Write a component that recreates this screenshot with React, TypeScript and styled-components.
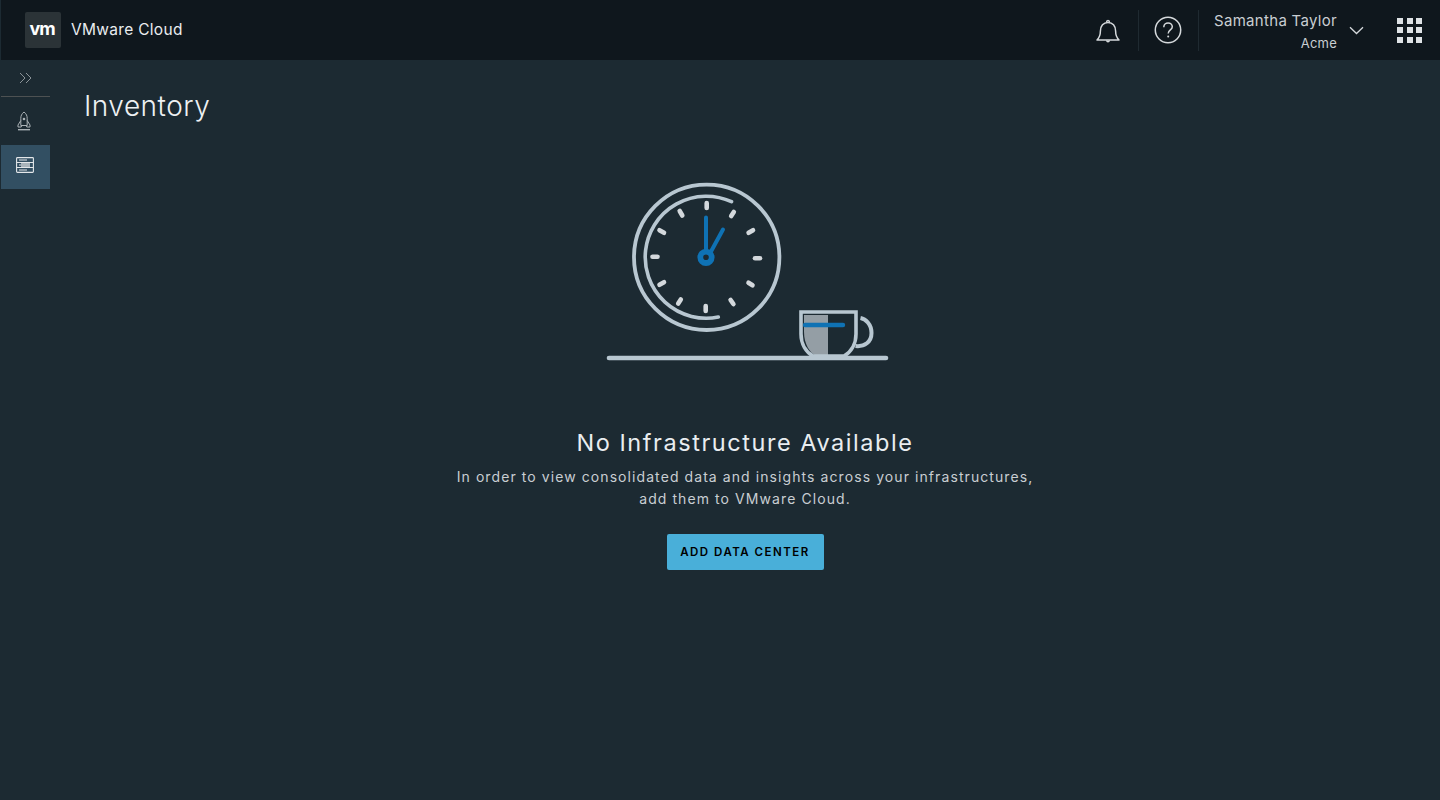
import styled, { createGlobalStyle } from "styled-components";

const GlobalStyle = createGlobalStyle`
  html, body {
    margin: 0;
    padding: 0;
    background: #1c2a32;
  }
  * {
    box-sizing: border-box;
  }
`;

const Page = styled.div`
  width: 1440px;
  height: 800px;
  overflow: hidden;
  display: flex;
  flex-direction: column;
  padding-left: 1px;
  background: #1c2a32;
  font-family: Inter, "Liberation Sans", sans-serif;
`;

const Header = styled.header`
  height: 60px;
  flex: none;
  display: flex;
  align-items: center;
  padding-left: 24px;
  background: #0f171d;
`;

const Logo = styled.div`
  width: 36px;
  height: 36px;
  border-radius: 2px;
  background: #2b3337;
  display: flex;
  align-items: center;
  justify-content: center;
  padding-right: 2px;
`;

const LogoMark = styled.span`
  color: #fff;
  font-size: 18px;
  font-weight: 700;
  letter-spacing: -1.2px;
  line-height: 1;
  margin-top: -3px;
`;

const Brand = styled.span`
  margin: -2px 0 0 10px;
  color: #e9ecef;
  font-size: 15.5px;
  letter-spacing: 0.3px;
`;

const Actions = styled.div`
  margin-left: auto;
  height: 100%;
  display: flex;
  align-items: center;
`;

const IconCell = styled.div`
  width: 60px;
  height: 41px;
  padding-right: 2px;
  display: flex;
  align-items: center;
  justify-content: center;
  border-right: 1px solid #1f2a31;
`;

const User = styled.div`
  margin: 3px 0 0 15px;
  display: flex;
  flex-direction: column;
  align-items: flex-end;
  gap: 6px;
  color: #c9ced2;
`;

const UserName = styled.span`
  font-size: 15px;
  line-height: 17px;
  letter-spacing: 0.3px;
`;

const UserOrg = styled.span`
  font-size: 13px;
  line-height: 16px;
  letter-spacing: 0.2px;
`;

const Caret = styled.div`
  margin-left: 12px;
  display: flex;
`;

const AppsGrid = styled.div`
  margin: 0 18px 0 33px;
  display: grid;
  grid-template-columns: repeat(3, 6px);
  grid-auto-rows: 6px;
  gap: 3.5px;
`;

const AppDot = styled.span`
  background: #dfe3e6;
`;

const Body = styled.div`
  flex: 1;
  display: flex;
  min-height: 0;
`;

const Sidebar = styled.nav`
  width: 49px;
  flex: none;
  display: flex;
  flex-direction: column;
`;

const Collapse = styled.div`
  height: 37px;
  display: flex;
  align-items: center;
  justify-content: center;
  border-bottom: 1px solid #4d5152;
`;

const NavItem = styled.div<{ $active?: boolean }>`
  height: 44px;
  margin-top: ${(p) => (p.$active ? "4px" : "0")};
  padding: ${(p) => (p.$active ? "0 1px 4px 0" : "4px 3px 0 0")};
  display: flex;
  align-items: center;
  justify-content: center;
  background: ${(p) => (p.$active ? "#324f62" : "transparent")};
`;

const Main = styled.main`
  flex: 1;
  display: flex;
  flex-direction: column;
  padding: 0 34px;
`;

const Title = styled.h1`
  margin: 29px 0 0;
  color: #eef1f3;
  font-size: 28px;
  font-weight: 300;
  line-height: 34px;
  letter-spacing: 0.5px;
`;

const Empty = styled.section`
  margin: 47px -34px 0;
  display: flex;
  flex-direction: column;
  align-items: center;
`;

const Illustration = styled.svg`
  display: block;
  width: 300px;
  height: 200px;
  margin-left: 10px;
`;

const EmptyTitle = styled.h2`
  margin: 58px 0 0;
  color: #e9edf0;
  font-size: 23.5px;
  font-weight: 400;
  line-height: 30px;
  letter-spacing: 1.55px;
`;

const EmptyText = styled.p`
  margin: 8px 0 0;
  color: #c9ced2;
  font-size: 14px;
  font-weight: 400;
  line-height: 22px;
  letter-spacing: 1.08px;
  text-align: center;
`;

const PrimaryButton = styled.button`
  margin-top: 24px;
  width: 157px;
  height: 36px;
  border: none;
  border-radius: 2px;
  background: #49afd9;
  color: #000;
  font-family: inherit;
  font-size: 11.5px;
  font-weight: 600;
  letter-spacing: 1.5px;
`;

const clockTicks = [
  [106.7, 33, 106.7, 38],
  [133.8, 42, 131.2, 46],
  [153, 60.2, 148.6, 62.8],
  [160, 88.3, 155, 88.3],
  [152.5, 115.3, 148.5, 112.7],
  [133.4, 134, 130.6, 130],
  [105.7, 141, 105.7, 136],
  [78.2, 133.5, 80.8, 129.5],
  [59.5, 114.8, 64, 112.2],
  [52.5, 86.7, 57.5, 86.7],
  [59.5, 60.2, 64, 62.8],
  [79.7, 41, 82.3, 45.5],
];

function App() {
  return (
    <>
      <GlobalStyle />
      <Page>
        <Header>
          <Logo>
            <LogoMark>vm</LogoMark>
          </Logo>
          <Brand>VMware Cloud</Brand>
          <Actions>
            <IconCell>
              <svg width="28" height="28" viewBox="0 0 28 28" fill="none" stroke="#d5d9dc" strokeWidth="1.5">
                <path d="M3 24h22c-2-2-3.4-3.6-3.4-9 0-5-3-8.6-7.6-8.6S6.4 10 6.4 15c0 5.4-1.4 7-3.4 9z" strokeLinejoin="round" />
                <path d="M12.5 6.4c0-2.4 3-2.4 3 0" />
                <path d="M12.6 24.4c.4 1.7 2.4 1.7 2.8 0" />
              </svg>
            </IconCell>
            <IconCell>
              <svg width="28" height="28" viewBox="0 0 28 28" fill="none" stroke="#d5d9dc" strokeWidth="1.5">
                <circle cx="14" cy="14" r="12.7" />
                <path d="M9.8 11.2c0-2.6 2-4.2 4.3-4.2 2.4 0 4.2 1.6 4.2 3.7 0 3.2-4.1 3.2-4.1 6.8" />
                <circle cx="14.2" cy="20.6" r="1" fill="#d5d9dc" stroke="none" />
              </svg>
            </IconCell>
            <User>
              <UserName>Samantha Taylor</UserName>
              <UserOrg>Acme</UserOrg>
            </User>
            <Caret>
              <svg width="15" height="9" viewBox="0 0 15 9" fill="none" stroke="#d5d9dc" strokeWidth="1.3">
                <path d="M1 1.2l6.5 6.3L14 1.2" />
              </svg>
            </Caret>
            <AppsGrid>
              {Array.from({ length: 9 }).map((_, i) => (
                <AppDot key={i} />
              ))}
            </AppsGrid>
          </Actions>
        </Header>
        <Body>
          <Sidebar>
            <Collapse>
              <svg width="14" height="12" viewBox="0 0 14 12" fill="none" stroke="#8b9398" strokeWidth="1">
                <path d="M1 1l5 5-5 5M7 1l5 5-5 5" />
              </svg>
            </Collapse>
            <NavItem>
              <svg width="14" height="20" viewBox="0 0 14 20" fill="none" stroke="#aab1b5" strokeWidth="1">
                <path d="M7 1c2.4 1.8 3.2 4 3.2 6.4v7.1H3.8V7.4C3.8 5 4.6 2.8 7 1z" />
                <path d="M3.8 9.5L1 14v2h3.2l.5-1.5M10.2 9.5L13 14v2H9.8l-.5-1.5" />
                <circle cx="7" cy="8" r="1.3" fill="#aab1b5" stroke="none" />
                <path d="M1 18.7h12" strokeWidth="1.4" />
              </svg>
            </NavItem>
            <NavItem $active>
              <svg width="18" height="16" viewBox="0 0 18 16" fill="none">
                <rect x=".6" y=".6" width="16.8" height="14.8" rx=".8" stroke="#e3e7ea" strokeWidth="1.1" />
                <path d="M.6 5.5h16.8M.6 10.5h16.8" stroke="#e3e7ea" strokeWidth="1" />
                <rect x="5" y="6" width="9" height="4" fill="#a9b4bb" />
                <path d="M3 3h8M3 8h2M3 13h8" stroke="#e3e7ea" strokeWidth="1" />
              </svg>
            </NavItem>
          </Sidebar>
          <Main>
            <Title>Inventory</Title>
            <Empty>
              <Illustration viewBox="0 0 300 200" fill="none">
                <circle cx="106.7" cy="87.3" r="72.7" stroke="#b8c7d1" strokeWidth="3.8" />
                <path
                  d="M131.5 31.7A61 61 0 1 0 118.3 147"
                  stroke="#b8c7d1"
                  strokeWidth="3.6"
                  strokeLinecap="round"
                />
                {clockTicks.map(([x1, y1, x2, y2], i) => (
                  <line
                    key={i}
                    x1={x1}
                    y1={y1}
                    x2={x2}
                    y2={y2}
                    stroke="#d3d8dc"
                    strokeWidth="4.6"
                    strokeLinecap="round"
                  />
                ))}
                <path
                  d="M106 47.5v33M123 59.5l-12 22"
                  stroke="#0f72b4"
                  strokeWidth="4"
                  strokeLinecap="round"
                />
                <circle cx="106" cy="87.3" r="5.7" stroke="#0f72b4" strokeWidth="5.8" fill="#1c2a32" />
                <path d="M204 145h24v41h-12c-6-3-12-12-12-24z" fill="#949ea5" />
                <path
                  d="M201 142h55v22c0 10-5 18-12 22h-31c-7-4-12-12-12-22z"
                  stroke="#b8c7d1"
                  strokeWidth="3.6"
                />
                <path
                  d="M260.5 148c5 1 11 6 11 15s-7 14-16 13"
                  stroke="#b8c7d1"
                  strokeWidth="4"
                />
                <path d="M205 155h38" stroke="#0f72b4" strokeWidth="4.4" strokeLinecap="round" />
                <path d="M9 188h277" stroke="#b8c7d1" strokeWidth="4.6" strokeLinecap="round" />
              </Illustration>
              <EmptyTitle>No Infrastructure Available</EmptyTitle>
              <EmptyText>
                In order to view consolidated data and insights across your infrastructures,
                <br />
                add them to VMware Cloud.
              </EmptyText>
              <PrimaryButton>ADD DATA CENTER</PrimaryButton>
            </Empty>
          </Main>
        </Body>
      </Page>
    </>
  );
}

export default App;
